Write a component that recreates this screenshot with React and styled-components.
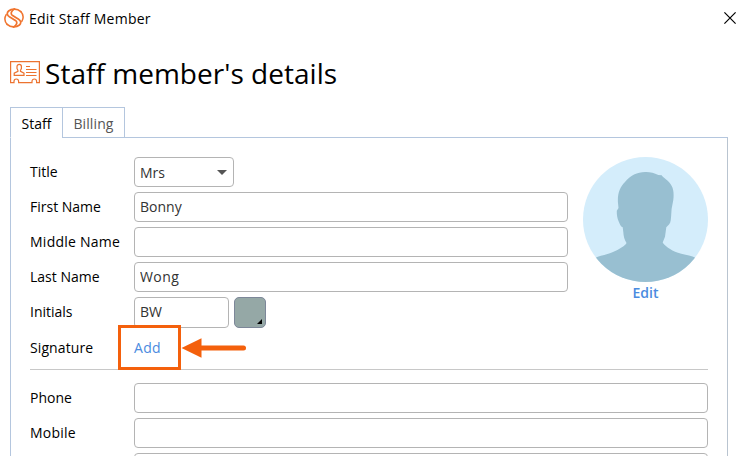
import styled, { createGlobalStyle } from "styled-components";

export default function App() {
  return (
    <>
      <GlobalStyle />
      <Dialog>
        <TitleBar>
          <LogoIcon />
          <WindowTitle>Edit Staff Member</WindowTitle>
          <CloseButton title="Close">
            <svg width="12" height="12" viewBox="0 0 12 12">
              <path d="M0.4 0.4L11.6 11.6M11.6 0.4L0.4 11.6" stroke="#000" strokeWidth="1.2" />
            </svg>
          </CloseButton>
        </TitleBar>

        <Heading>
          <BadgeIcon />
          <HeadingText>Staff member's details</HeadingText>
        </Heading>

        <Tabs>
          <Tab $active $width={52} $spacing="0">Staff</Tab>
          <Tab $width={63} $spacing="0.1px">Billing</Tab>
          <TabFiller />
        </Tabs>

        <Panel>
          <TopSection>
            <Fields>
              <Row>
                <Label>Title</Label>
                <Select>
                  Mrs
                  <Caret />
                </Select>
              </Row>
              <Row>
                <Label>First Name</Label>
                <Input defaultValue="Bonny" />
              </Row>
              <Row>
                <Label $spacing="0.25px">Middle Name</Label>
                <Input />
              </Row>
              <Row>
                <Label>Last Name</Label>
                <Input defaultValue="Wong" $spacing="0.4px" />
              </Row>
              <Row>
                <Label>Initials</Label>
                <Input $width={95} $tall defaultValue="BW" />
                <Swatch title="Colour">
                  <SwatchCorner />
                </Swatch>
              </Row>
              <SignatureRow>
                <Label $spacing="0.1px">Signature</Label>
                <LinkArea>
                  <Link>Add</Link>
                  <Callout>
                    <CalloutBox />
                    <Arrow />
                  </Callout>
                </LinkArea>
              </SignatureRow>
            </Fields>
            <Photo>
              <Avatar />
              <EditLink>Edit</EditLink>
            </Photo>
          </TopSection>

          <Divider />

          <ContactFields>
            <Row>
              <Label>Phone</Label>
              <Input />
            </Row>
            <Row>
              <Label $spacing="0.2px">Mobile</Label>
              <Input />
            </Row>
            <Row>
              <Label />
              <Input />
            </Row>
          </ContactFields>
        </Panel>
      </Dialog>
    </>
  );
}

function LogoIcon() {
  return (
    <svg width="20" height="20" viewBox="0 0 20 20" fill="none" stroke="#f0752f" strokeLinecap="round">
      <path d="M16.8 3.6C13.2 0.4 7.6 0.4 4.6 3C2.4 5 3.2 7.4 5.4 8.8L11.4 12.4C14 14.2 12.6 17.4 9.6 19" strokeWidth="1.7" />
      <path d="M3.2 16.4C6.8 19.6 12.4 19.6 15.4 17C17.6 15 16.8 12.6 14.6 11.2L8.6 7.6C6 5.8 7.4 2.6 10.4 1" strokeWidth="1.7" />
      <path d="M2.2 6.6C0.2 10 1 14 3.2 16.4M17.8 13.4C19.8 10 19 6 16.8 3.6" strokeWidth="1.5" />
    </svg>
  );
}

function BadgeIcon() {
  return (
    <svg width="30" height="23" viewBox="0 0 30 23" fill="none" stroke="#ec7330" strokeWidth="1.2">
      <path d="M0.6 0.6H29.4V21.6H26.6V20.3A2.3 2.3 0 0 0 22 20.3V21.6H8.6V20.3A2.3 2.3 0 0 0 4 20.3V21.6H0.6Z" />
      <path d="M7 7.5V5.6A2.2 2.2 0 0 1 11.4 5.6V7.5L10.5 9.3V10.4L14 12.1V14.4H4.2V12.1L7.9 10.4V9.3Z" />
      <path d="M16 5.5H20M16 8.5H26.5M16 11.5H26.5M16 14.5H26.5" />
    </svg>
  );
}

function Avatar() {
  return (
    <svg width="125" height="125" viewBox="0 0 125 125">
      <defs>
        <clipPath id="avatar-circle">
          <circle cx="62.5" cy="62.5" r="62.5" />
        </clipPath>
      </defs>
      <circle cx="62.5" cy="62.5" r="62.5" fill="#d4edfb" />
      <path
        clipPath="url(#avatar-circle)"
        fill="#98bfd1"
        d="M62 15C67 14.8 71 16 75.3 18L78.7 18.3C80 21 86 23.5 88.7 29C90.5 32 91 37 90.3 43L88.6 52L88.2 58C87.8 62 88 65.5 86 67.5L83.3 70.3L82 79.7L79.7 85.5C81.5 88.5 87 93 95 95.8C101 98 107 97.8 113 101V125H12V101C17 98.5 24 97.8 30 95C36 92.3 42 89 43.5 86C41.5 83 40.5 79 40.3 75L39.7 70.3C37.5 69.5 36.7 67 35.7 64.5C34 61 33.7 57 33.8 53.7L35.5 51L34.9 45C34.6 36 37 30 42 25C47 18.5 54.5 15 62 15Z"
      />
    </svg>
  );
}

function Arrow() {
  return (
    <svg width="66" height="20" viewBox="0 0 66 20">
      <path d="M0.5 10L20.5 0.3V19.7Z" fill="#f4600c" />
      <path d="M18 10H62.5" stroke="#f4600c" strokeWidth="5" strokeLinecap="round" />
    </svg>
  );
}

const GlobalStyle = createGlobalStyle`
  * {
    box-sizing: border-box;
  }

  body {
    margin: 0;
    overflow: hidden;
    background: #fff;
    font-family: "Open Sans", "Noto Sans", sans-serif;
    font-size: 14px;
    color: #111;
  }
`;

const Dialog = styled.div`
  width: 748px;
  height: 456px;
  overflow: hidden;
  background: #fff;
`;

const TitleBar = styled.div`
  display: flex;
  align-items: center;
  height: 36px;
  padding: 0 12px 0 4px;
`;

const WindowTitle = styled.span`
  flex: 1;
  margin-left: 5px;
  line-height: 20px;
  letter-spacing: 0.25px;
  color: #000;
  padding-top: 1px;
`;

const CloseButton = styled.button`
  display: flex;
  padding: 0;
  border: none;
  background: none;
`;

const Heading = styled.div`
  display: flex;
  align-items: center;
  height: 71px;
  padding: 2px 0 0 10px;
`;

const HeadingText = styled.h1`
  margin: 0 0 0 5px;
  font-size: 28px;
  font-weight: 400;
  line-height: 38px;
  letter-spacing: 0.03px;
  color: #000;
  white-space: nowrap;
`;

const Tabs = styled.div`
  display: flex;
  height: 31px;
  padding: 0 20px 0 10px;
`;

const Tab = styled.div`
  display: flex;
  align-items: center;
  justify-content: center;
  width: ${(props) => props.$width}px;
  padding-top: 2px;
  border: 1px solid #b4c6de;
  border-right-width: ${(props) => (props.$active ? 0 : "1px")};
  border-bottom-color: ${(props) => (props.$active ? "#fff" : "#b4c6de")};
  letter-spacing: ${(props) => props.$spacing};
  color: ${(props) => (props.$active ? "#000" : "#555")};
`;

const TabFiller = styled.div`
  flex: 1;
  border-bottom: 1px solid #b4c6de;
`;

const Panel = styled.div`
  height: 330px;
  margin: 0 20px 0 10px;
  padding: 19px 19px 0;
  border: 1px solid #b9c4d0;
  border-left-color: #b4c6de;
  border-width: 0 1px;
`;

const TopSection = styled.div`
  display: flex;
  justify-content: space-between;
`;

const Fields = styled.div`
  display: flex;
  flex-direction: column;
  gap: 5px;
  width: 538px;
`;

const Row = styled.div`
  display: flex;
  height: 30px;
`;

const Label = styled.label`
  flex: none;
  width: 104px;
  line-height: 30px;
  letter-spacing: ${(props) => props.$spacing || "normal"};
  color: #000;
  white-space: nowrap;
`;

const Input = styled.input`
  flex: ${(props) => (props.$width ? "none" : 1)};
  width: ${(props) => (props.$width ? `${props.$width}px` : "auto")};
  min-width: 0;
  height: ${(props) => (props.$tall ? 31 : 30)}px;
  padding: 0 5px 2px;
  border: 1px solid #b4b4b4;
  border-radius: 4px;
  outline: none;
  background: #fff;
  font: inherit;
  letter-spacing: ${(props) => props.$spacing || "normal"};
  color: #333;
`;

const Select = styled.div`
  display: flex;
  align-items: center;
  justify-content: space-between;
  width: 100px;
  height: 30px;
  padding: 0 6px 0 5px;
  border: 1px solid #b4b4b4;
  border-radius: 4px;
  color: #333;
`;

const Caret = styled.span`
  border: 5px solid transparent;
  border-top-color: #555;
  border-bottom-width: 0;
`;

const Swatch = styled.button`
  display: flex;
  align-items: flex-end;
  justify-content: flex-end;
  width: 32px;
  height: 31px;
  margin-left: 5px;
  padding: 0 3px 3px 0;
  border: 1px solid #7d8799;
  border-radius: 5px;
  background: #95a8a6;
`;

const SwatchCorner = styled.span`
  border-left: 5px solid transparent;
  border-bottom: 5px solid #000;
`;

const SignatureRow = styled(Row)`
  margin-top: 1px;
`;

const LinkArea = styled.div`
  position: relative;
  line-height: 30px;
`;

const Link = styled.a`
  letter-spacing: 0.3px;
  color: #4a8be0;
`;

// Highlight drawn over the form, pointing at the link
const Callout = styled.div`
  position: absolute;
  top: -8px;
  left: -16px;
  display: flex;
  align-items: center;
`;

const CalloutBox = styled.div`
  width: 63px;
  height: 45px;
  border: 3px solid #f4600c;
`;

const Photo = styled.div`
  display: flex;
  flex-direction: column;
  align-items: center;
  width: 125px;
`;

const EditLink = styled.a`
  line-height: 22px;
  font-weight: 600;
  color: #4a8be0;
`;

const Divider = styled.div`
  height: 1px;
  margin-top: 6px;
  background: #c8c8c8;
`;

const ContactFields = styled.div`
  display: flex;
  flex-direction: column;
  gap: 5px;
  padding-top: 13px;
`;
